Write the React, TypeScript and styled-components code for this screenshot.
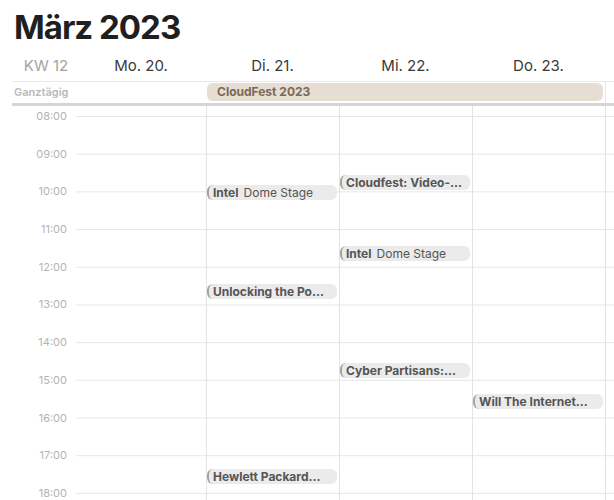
import React from "react";
import styled, { createGlobalStyle } from "styled-components";

const HOUR = 37.7;
const FIRST_HOUR = 8;
const GRID_TOP = 10;
const COLS = "76px 130px 133px 133px 133px 1fr";

const GlobalStyle = createGlobalStyle`
  html, body {
    margin: 0;
    padding: 0;
    background: #ffffff;
    overflow: hidden;
  }
  body {
    font-family: Inter, "Noto Sans", "Liberation Sans", sans-serif;
    -webkit-font-smoothing: antialiased;
  }
`;

const Page = styled.div`
  width: 614px;
  height: 500px;
  overflow: hidden;
`;

const Title = styled.h1`
  margin: 0;
  height: 49px;
  box-sizing: border-box;
  padding: 11px 0 0 14px;
  font-size: 33px;
  line-height: 33px;
  font-weight: 700;
  color: #1f1f1f;
  letter-spacing: -1px;
`;

const HeaderRow = styled.div`
  display: grid;
  grid-template-columns: ${COLS};
  height: 32px;
  align-items: center;
`;

const DayLabel = styled.div<{ $muted?: boolean }>`
  text-align: center;
  font-size: 15px;
  color: ${(p) => (p.$muted ? "#a3a3a3" : "#3a3a3a")};
  padding-left: ${(p) => (p.$muted ? "16px" : "0")};
`;

const AllDayRow = styled.div`
  display: grid;
  grid-template-columns: 64px 130px 133px 133px 133px 1fr;
  margin-left: 12px;
  height: 21px;
  border-top: 1px solid #e9e9e9;
  border-bottom: 3px solid #d5d5d5;
`;

const AllDayLabel = styled.div`
  font-size: 11px;
  font-weight: 600;
  color: #b9b9b9;
  line-height: 21px;
  padding-left: 2px;
`;

const AllDayCell = styled.div`
  border-left: 1px solid #e6e6e6;
`;

const Banner = styled.div`
  grid-column: 3 / 6;
  grid-row: 1;
  margin: 1px 2px 2px 1px;
  border-radius: 6px;
  background: #e6ddd3;
  color: #7a6a59;
  font-size: 12px;
  font-weight: 700;
  line-height: 18px;
  padding-left: 10px;
  z-index: 1;
`;

const TimeGrid = styled.div`
  display: grid;
  grid-template-columns: ${COLS};
  height: 400px;
`;

const Gutter = styled.div`
  display: flex;
  flex-direction: column;
  padding-top: ${GRID_TOP - 6}px;
`;

const HourLabel = styled.div`
  height: ${HOUR}px;
  flex-shrink: 0;
  line-height: 12px;
  font-size: 11px;
  color: #b3b3b3;
  text-align: right;
  padding-right: 9px;
`;

const DayColumn = styled.div<{ $edge?: boolean }>`
  position: relative;
  border-left: ${(p) => (p.$edge ? "none" : "1px solid #e3e3e3")};
  background-image: linear-gradient(#e6e6e6 1px, transparent 1px);
  background-size: 100% ${HOUR}px;
  background-position: 0 ${GRID_TOP}px;
  background-repeat: repeat-y;
`;

const Event = styled.div`
  position: absolute;
  left: 0;
  right: 2px;
  height: 15px;
  box-sizing: border-box;
  border-radius: 6px;
  border-left: 2.5px solid #a3a3a3;
  background: #ebebeb;
  padding-left: 4px;
  font-size: 12px;
  line-height: 15px;
  color: #555555;
  white-space: nowrap;
  overflow: hidden;
`;

const EventTitle = styled.span`
  font-weight: 700;
`;

const EventPlace = styled.span`
  font-weight: 400;
  margin-left: 5px;
`;

type Ev = { day: number; start: string; title: string; place?: string };

const events: Ev[] = [
  { day: 1, start: "09:50", title: "Intel", place: "Dome Stage" },
  { day: 2, start: "09:34", title: "Cloudfest: Video-..." },
  { day: 2, start: "11:27", title: "Intel", place: "Dome Stage" },
  { day: 1, start: "12:27", title: "Unlocking the Po..." },
  { day: 2, start: "14:33", title: "Cyber Partisans:..." },
  { day: 3, start: "15:22", title: "Will The Internet..." },
  { day: 1, start: "17:22", title: "Hewlett Packard..." },
];

const days = ["Mo. 20.", "Di. 21.", "Mi. 22.", "Do. 23."];
const hours = ["08:00", "09:00", "10:00", "11:00", "12:00", "13:00", "14:00", "15:00", "16:00", "17:00", "18:00"];

function topFor(start: string) {
  const [h, m] = start.split(":").map(Number);
  return GRID_TOP + (h - FIRST_HOUR + m / 60) * HOUR;
}

export default function App() {
  return (
    <Page>
      <GlobalStyle />
      <Title>März 2023</Title>
      <HeaderRow>
        <DayLabel $muted>KW 12</DayLabel>
        {days.map((d) => (
          <DayLabel key={d}>{d}</DayLabel>
        ))}
      </HeaderRow>
      <AllDayRow>
        <AllDayLabel>Ganztägig</AllDayLabel>
        <div />
        <AllDayCell />
        <AllDayCell />
        <AllDayCell />
        <AllDayCell />
        <Banner>CloudFest 2023</Banner>
      </AllDayRow>
      <TimeGrid>
        <Gutter>
          {hours.map((h) => (
            <HourLabel key={h}>{h}</HourLabel>
          ))}
        </Gutter>
        {[0, 1, 2, 3, 4].map((i) => (
          <DayColumn key={i} $edge={i === 0}>
            {events
              .filter((e) => e.day === i)
              .map((e) => (
                <Event key={e.start + e.title} style={{ top: topFor(e.start) }}>
                  <EventTitle>{e.title}</EventTitle>
                  {e.place && <EventPlace>{e.place}</EventPlace>}
                </Event>
              ))}
          </DayColumn>
        ))}
      </TimeGrid>
    </Page>
  );
}
